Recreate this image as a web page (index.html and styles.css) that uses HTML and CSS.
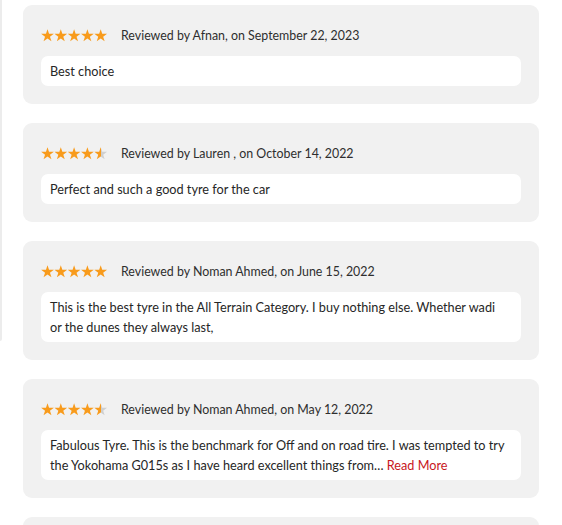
FILE: index.html
```html
<!DOCTYPE html>
<html>
<head>
<meta charset="utf-8">
<link rel="stylesheet" href="styles.css">
</head>
<body>
<svg class="defs" width="0" height="0" aria-hidden="true">
  <defs>
    <linearGradient id="half" x1="0" x2="1" y1="0" y2="0">
      <stop offset="50%" stop-color="#f89b1c"/>
      <stop offset="50%" stop-color="#cfcfcf"/>
    </linearGradient>
    <symbol id="star" viewBox="0 0 13 13">
      <polygon points="6.5,0.2 8.03,4.8 12.87,4.83 8.97,7.7 10.44,12.32 6.5,9.5 2.56,12.32 4.03,7.7 0.13,4.83 4.97,4.8"/>
    </symbol>
  </defs>
</svg>
<div class="page">
  <div class="side"></div>
  <div class="list">
    <div class="card">
      <div class="head">
        <svg class="stars" width="68" height="13" viewBox="0 0 68 13">
          <use href="#star" x="0" width="13" height="13" fill="#f89b1c"/>
          <use href="#star" x="13.3" width="13" height="13" fill="#f89b1c"/>
          <use href="#star" x="26.6" width="13" height="13" fill="#f89b1c"/>
          <use href="#star" x="39.9" width="13" height="13" fill="#f89b1c"/>
          <use href="#star" x="53.2" width="13" height="13" fill="#f89b1c"/>
        </svg>
        <span class="by">Reviewed by Afnan, on September 22, 2023</span>
      </div>
      <div class="body">Best choice</div>
    </div>
    <div class="card">
      <div class="head">
        <svg class="stars" width="68" height="13" viewBox="0 0 68 13">
          <use href="#star" x="0" width="13" height="13" fill="#f89b1c"/>
          <use href="#star" x="13.3" width="13" height="13" fill="#f89b1c"/>
          <use href="#star" x="26.6" width="13" height="13" fill="#f89b1c"/>
          <use href="#star" x="39.9" width="13" height="13" fill="#f89b1c"/>
          <use href="#star" x="53.2" width="13" height="13" fill="url(#half)"/>
        </svg>
        <span class="by">Reviewed by Lauren , on October 14, 2022</span>
      </div>
      <div class="body">Perfect and such a good tyre for the car</div>
    </div>
    <div class="card">
      <div class="head">
        <svg class="stars" width="68" height="13" viewBox="0 0 68 13">
          <use href="#star" x="0" width="13" height="13" fill="#f89b1c"/>
          <use href="#star" x="13.3" width="13" height="13" fill="#f89b1c"/>
          <use href="#star" x="26.6" width="13" height="13" fill="#f89b1c"/>
          <use href="#star" x="39.9" width="13" height="13" fill="#f89b1c"/>
          <use href="#star" x="53.2" width="13" height="13" fill="#f89b1c"/>
        </svg>
        <span class="by">Reviewed by Noman Ahmed, on June 15, 2022</span>
      </div>
      <div class="body">This is the best tyre in the All Terrain Category. I buy nothing else. Whether wadi or the dunes they always last,</div>
    </div>
    <div class="card">
      <div class="head">
        <svg class="stars" width="68" height="13" viewBox="0 0 68 13">
          <use href="#star" x="0" width="13" height="13" fill="#f89b1c"/>
          <use href="#star" x="13.3" width="13" height="13" fill="#f89b1c"/>
          <use href="#star" x="26.6" width="13" height="13" fill="#f89b1c"/>
          <use href="#star" x="39.9" width="13" height="13" fill="#f89b1c"/>
          <use href="#star" x="53.2" width="13" height="13" fill="url(#half)"/>
        </svg>
        <span class="by">Reviewed by Noman Ahmed, on May 12, 2022</span>
      </div>
      <div class="body">Fabulous Tyre. This is the benchmark for Off and on road tire. I was tempted to try the Yokohama G015s as I have heard excellent things from… <a class="more" href="#">Read More</a></div>
    </div>
    <div class="card card-last"></div>
  </div>
</div>
</body>
</html>
```
FILE: styles.css
```css
html, body {
  margin: 0;
  padding: 0;
  background: #ffffff;
  overflow: hidden;
}
body {
  font-family: "Lato", "Open Sans", sans-serif;
  color: #2b2b2b;
  font-size: 13px;
}
.defs {
  position: absolute;
  width: 0;
  height: 0;
}
.page {
  display: flex;
  align-items: flex-start;
}
.side {
  width: 2px;
  height: 341px;
  background: #ececec;
  border-radius: 0 0 2px 0;
  flex: none;
}
.list {
  margin-left: 21px;
  padding-top: 5px;
  width: 516px;
  display: flex;
  flex-direction: column;
  gap: 19px;
}
.card {
  background: #f1f1f1;
  border-radius: 9px;
  padding: 18px;
}
.card-last {
  height: 80px;
}
.head {
  height: 24px;
  display: flex;
  align-items: center;
  margin-bottom: 9px;
}
.stars {
  display: block;
  flex: none;
}
.by {
  margin-left: 12px;
  font-size: 12.4px;
  color: #2e2e2e;
}
.body {
  background: #ffffff;
  border-radius: 7px;
  padding: 5px 13px 5px 9px;
  line-height: 20px;
  font-size: 12.7px;
  color: #262626;
}
.more {
  color: #c8161d;
  text-decoration: none;
}
```
